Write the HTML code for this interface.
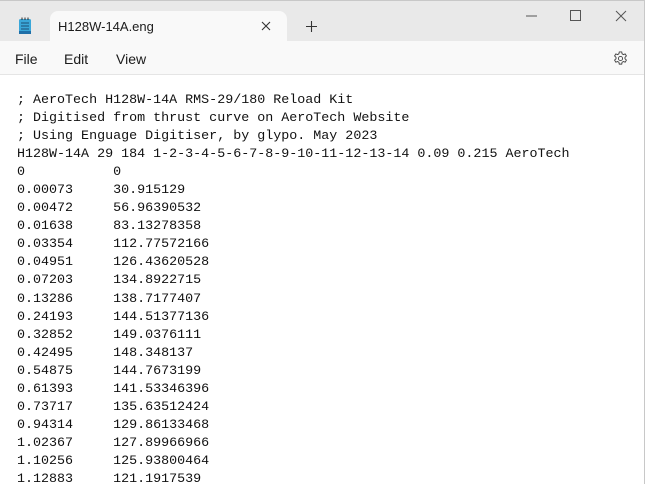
<!DOCTYPE html>
<html><head><style>
body{margin:0;width:645px;height:484px;overflow:hidden;background:#fff;font-family:"Liberation Sans",sans-serif;position:relative}
.title{position:absolute;left:0;top:0;width:645px;height:41px;background:#e9e9e9;border-top:1px solid #c8c8c8;box-sizing:border-box}
.tab{position:absolute;left:50px;top:11px;width:237px;height:31px;background:#f9f9f9;border-radius:8px 8px 0 0}
.menu{position:absolute;left:0;top:41px;width:645px;height:33px;background:#f9f9f9;border-bottom:1px solid #e5e5e5}
.m{position:absolute;top:51px;font-size:14px;color:#1b1b1b}
pre{position:absolute;left:17px;top:92px;margin:0;font-family:"Liberation Mono",monospace;font-size:13.35px;line-height:18.05px;color:#111}
</style></head><body>
<div class="title"></div>
<div class="tab"></div>
<svg style="position:absolute;left:18px;top:17px" width="14" height="18" viewBox="0 0 14 18"><rect x="1" y="2" width="12" height="15" rx="1.5" fill="#3aa7d9"/><rect x="1" y="14" width="12" height="3" fill="#1f6fa8"/><g stroke="#1c4f75" stroke-width="1"><line x1="3" y1="6" x2="11" y2="6"/><line x1="3" y1="9" x2="11" y2="9"/><line x1="3" y1="12" x2="11" y2="12"/></g><g stroke="#2b2b2b"><line x1="4" y1="0.5" x2="4" y2="3"/><line x1="7" y1="0.5" x2="7" y2="3"/><line x1="10" y1="0.5" x2="10" y2="3"/></g></svg>
<div style="position:absolute;left:58px;top:19px;font-size:13px;color:#1b1b1b">H128W-14A.eng</div>
<svg style="position:absolute;left:261px;top:21px" width="10" height="10"><path d="M1 1L9 9M9 1L1 9" stroke="#333" stroke-width="1.1"/></svg>
<svg style="position:absolute;left:306px;top:21px" width="11" height="11"><path d="M5.5 0V11M0 5.5H11" stroke="#333" stroke-width="1.1"/></svg>
<svg style="position:absolute;left:525px;top:10px" width="110" height="12"><path d="M1 6H12" stroke="#555"/><rect x="45.5" y="0.5" width="10" height="10" fill="none" stroke="#555"/><path d="M91 1L101 11M101 1L91 11" stroke="#555"/></svg>
<div class="menu"></div>
<div class="m" style="left:15px">File</div>
<div class="m" style="left:64px">Edit</div>
<div class="m" style="left:116px">View</div>
<svg style="position:absolute;left:613px;top:51px" width="15" height="15" viewBox="0 0 16 16"><path d="M6.7 1h2.6l.4 2 1.4.8 1.9-.7 1.3 2.2-1.5 1.4v1.6l1.5 1.4-1.3 2.2-1.9-.7-1.4.8-.4 2H6.7l-.4-2-1.4-.8-1.9.7-1.3-2.2 1.5-1.4V6.7L1.7 5.3 3 3.1l1.9.7 1.4-.8z" fill="none" stroke="#444" stroke-width="1"/><circle cx="8" cy="8" r="2.2" fill="none" stroke="#444"/></svg>
<pre>; AeroTech H128W-14A RMS-29/180 Reload Kit
; Digitised from thrust curve on AeroTech Website
; Using Enguage Digitiser, by glypo. May 2023
H128W-14A 29 184 1-2-3-4-5-6-7-8-9-10-11-12-13-14 0.09 0.215 AeroTech
0           0
0.00073     30.915129
0.00472     56.96390532
0.01638     83.13278358
0.03354     112.77572166
0.04951     126.43620528
0.07203     134.8922715
0.13286     138.7177407
0.24193     144.51377136
0.32852     149.0376111
0.42495     148.348137
0.54875     144.7673199
0.61393     141.53346396
0.73717     135.63512424
0.94314     129.86133468
1.02367     127.89966966
1.10256     125.93800464
1.12883     121.1917539</pre>
<div style="position:absolute;right:0;top:0;width:1px;height:484px;background:#c8c8c8"></div>
</body></html>
